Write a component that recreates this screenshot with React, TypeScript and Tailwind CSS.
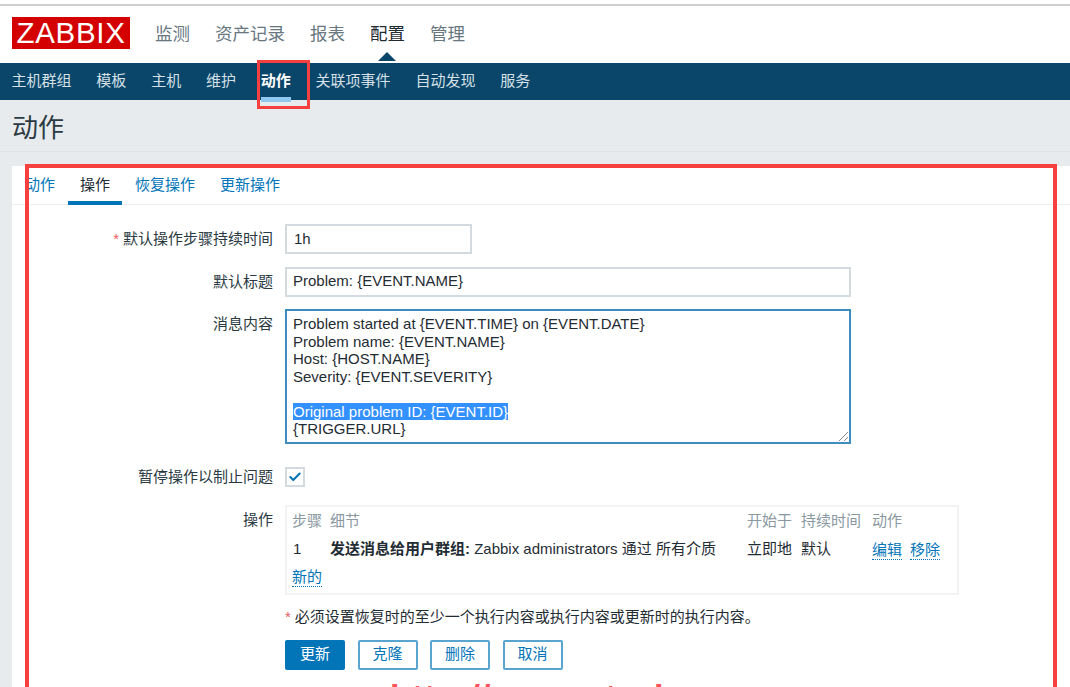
import { Check } from "lucide-react";

const topNav = ["监测", "资产记录", "报表", "配置", "管理"];
const subNav = ["主机群组", "模板", "主机", "维护", "动作", "关联项事件", "自动发现", "服务"];
const messageLines = [
  "Problem started at {EVENT.TIME} on {EVENT.DATE}",
  "Problem name: {EVENT.NAME}",
  "Host: {HOST.NAME}",
  "Severity: {EVENT.SEVERITY}",
];

const FormRow = ({ label, required, className, labelClassName, children }: { label: string; required?: boolean; className?: string; labelClassName?: string; children: React.ReactNode }) => (
  <div className={`flex ${className ?? ""}`}>
    <div className={`w-[273px] shrink-0 pr-3 text-right text-[#2b3a42] ${labelClassName ?? ""}`}>
      {required && <span className="mr-1 text-[#e85c5c]">*</span>}
      {label}
    </div>
    {children}
  </div>
);

export default function App() {
  return (
    <div className="relative h-[687px] w-[1070px] overflow-hidden bg-[#e8ebee] font-['Liberation_Sans','Noto_Sans_CJK_SC',sans-serif] text-[15px] text-[#1f2c33]">
      <div className="h-[4px] bg-white" />
      <div className="h-[2px] bg-[#cfcfcf]" />

      <header className="flex h-[56px] items-center bg-white pl-3">
        <div className="mb-[2px] flex h-[32px] w-[118px] items-center justify-center bg-[#d40000] text-[29.5px] leading-none tracking-[0.7px] text-white">
          ZABBIX
        </div>
        <nav className="ml-[25px] flex gap-[25px] text-[17.5px]">
          {topNav.map((item) => (
            <span key={item} className={item === "配置" ? "relative text-[#1f2c33]" : "text-[#68777f]"}>
              {item}
              {item === "配置" && (
                <span className="absolute left-[8px] top-[31px] h-0 w-0 border-x-[9px] border-b-[9px] border-x-transparent border-b-[#0a466a]" />
              )}
            </span>
          ))}
        </nav>
      </header>

      <div className="h-px bg-white" />
      <nav className="flex h-[37px] items-center gap-[24.8px] bg-[#0a466a] pl-[11.5px] text-[#d5e0e7]">
        {subNav.map((item) =>
          item === "动作" ? (
            <span key={item} className="relative font-bold text-white">
              {item}
              <span className="absolute -bottom-[9px] left-0 h-[5px] w-full bg-[#8fc9f2]" />
            </span>
          ) : (
            <span key={item}>{item}</span>
          ),
        )}
      </nav>

      <div className="flex h-[52px] items-center border-b border-[#dfe3e6] pl-3 pt-[6px] text-[26px] text-[#2b3a42]">动作</div>

      <main className="ml-3 mt-[14px] h-[600px] bg-white">
        <div className="flex h-[39px] gap-[25px] border-b border-[#ebeef0] pl-[13px]">
          <span className="pt-[8px] text-[#0275b8]">动作</span>
          <span className="relative w-[30px] pt-[8px]">
            操作
            <span className="absolute -left-[12px] bottom-[-1px] h-[4px] w-[54px] bg-[#0275b8]" />
          </span>
          <span className="pt-[8px] text-[#0275b8]">恢复操作</span>
          <span className="pt-[8px] text-[#0275b8]">更新操作</span>
        </div>

        <FormRow label="默认操作步骤持续时间" required className="mt-[19px] items-center">
          <div className="flex h-[30px] w-[187px] items-center border-2 border-[#d3dae0] pl-[7px]">1h</div>
        </FormRow>

        <FormRow label="默认标题" className="mt-[13px] items-center">
          <div className="flex h-[30px] w-[566px] items-center border-2 border-[#d3dae0] pb-[1px] pl-[6px]">
            Problem: {"{EVENT.NAME}"}
          </div>
        </FormRow>

        <FormRow label="消息内容" className="mt-[12px]" labelClassName="pt-[4px]">
          <div className="relative h-[135px] w-[566px] border-2 border-[#3f8dbf] pl-[6px] pt-[4px] leading-[17.5px]">
            {messageLines.map((line) => (
              <div key={line}>{line}</div>
            ))}
            <div className="h-[17.5px]" />
            <div>
              <span className="bg-[#3390ff] text-white">Original problem ID: {"{EVENT.ID}"}</span>
            </div>
            <div>{"{TRIGGER.URL}"}</div>
            <svg className="absolute bottom-0 right-0" width="11" height="11" viewBox="0 0 11 11">
              <path d="M1 10 10 1M6 10l4-4" stroke="#8a8a8a" strokeWidth="1" fill="none" />
            </svg>
          </div>
        </FormRow>

        <FormRow label="暂停操作以制止问题" className="mt-[22px] items-center">
          <div className="flex h-[20px] w-[20px] items-center justify-center border-2 border-[#d3dae0]">
            <Check className="h-[14px] w-[14px] text-[#0275b8]" strokeWidth={3.5} />
          </div>
        </FormRow>

        <FormRow label="操作" className="mt-[16px]" labelClassName="pt-[4px]">
          <div className="h-[90px] w-[674px] border-2 border-[#f3f3f3] pl-[5px] pt-[5px]">
            <div className="flex h-[20px] items-center text-[#8a99a1]">
              <span className="w-[38px]">步骤</span>
              <span className="w-[417px]">细节</span>
              <span className="w-[54px]">开始于</span>
              <span className="w-[71px]">持续时间</span>
              <span>动作</span>
            </div>
            <div className="mt-[8px] flex h-[20px] items-center">
              <span className="w-[38px] pl-[1px]">1</span>
              <span className="w-[417px]">
                <b>发送消息给用户群组:</b> Zabbix administrators 通过 所有介质
              </span>
              <span className="w-[54px]">立即地</span>
              <span className="w-[71px]">默认</span>
              <span className="border-b border-dotted border-[#0275b8] leading-[19px] text-[#0275b8]">编辑</span>
              <span className="ml-2 border-b border-dotted border-[#0275b8] leading-[19px] text-[#0275b8]">移除</span>
            </div>
            <div className="mt-[7px] flex h-[20px] items-center">
              <span className="border-b border-dotted border-[#0275b8] leading-[19px] text-[#0275b8]">新的</span>
            </div>
          </div>
        </FormRow>

        <div className="ml-[273px] mt-[12px] leading-[20px]">
          <span className="mr-1 text-[#e85c5c]">*</span>必须设置恢复时的至少一个执行内容或执行内容或更新时的执行内容。
        </div>

        <div className="ml-[273px] mt-[13px] flex gap-[12.5px]">
          <button className="h-[30px] w-[60px] rounded-[2px] bg-[#0275b8] text-white">更新</button>
          <button className="h-[30px] w-[60px] rounded-[2px] border-2 border-[#5aa4d0] text-[#0275b8]">克隆</button>
          <button className="h-[30px] w-[60px] rounded-[2px] border-2 border-[#5aa4d0] text-[#0275b8]">删除</button>
          <button className="h-[30px] w-[60px] rounded-[2px] border-2 border-[#5aa4d0] text-[#0275b8]">取消</button>
        </div>
      </main>

      {/* red annotation frames drawn over the screenshot */}
      <div className="absolute left-[257px] top-[60px] h-[49px] w-[53px] border-[3px] border-[#f5403f]" />
      <div className="absolute left-[25px] top-[164px] h-[560px] w-[1032px] border-4 border-[#f5403f]" />

      {/* watermark, only the tops of the letters are in frame */}
      <div className="absolute left-[390px] top-[679px] whitespace-pre text-[34px] font-bold leading-none tracking-[1px] text-[#f9525a]">
        http://
      </div>
      <div className="absolute left-[605px] top-[679px] text-[34px] font-bold leading-none text-[#f9525a]">t</div>
      <div className="absolute left-[654px] top-[679px] text-[34px] font-bold leading-none text-[#f9525a]">l</div>
    </div>
  );
}
